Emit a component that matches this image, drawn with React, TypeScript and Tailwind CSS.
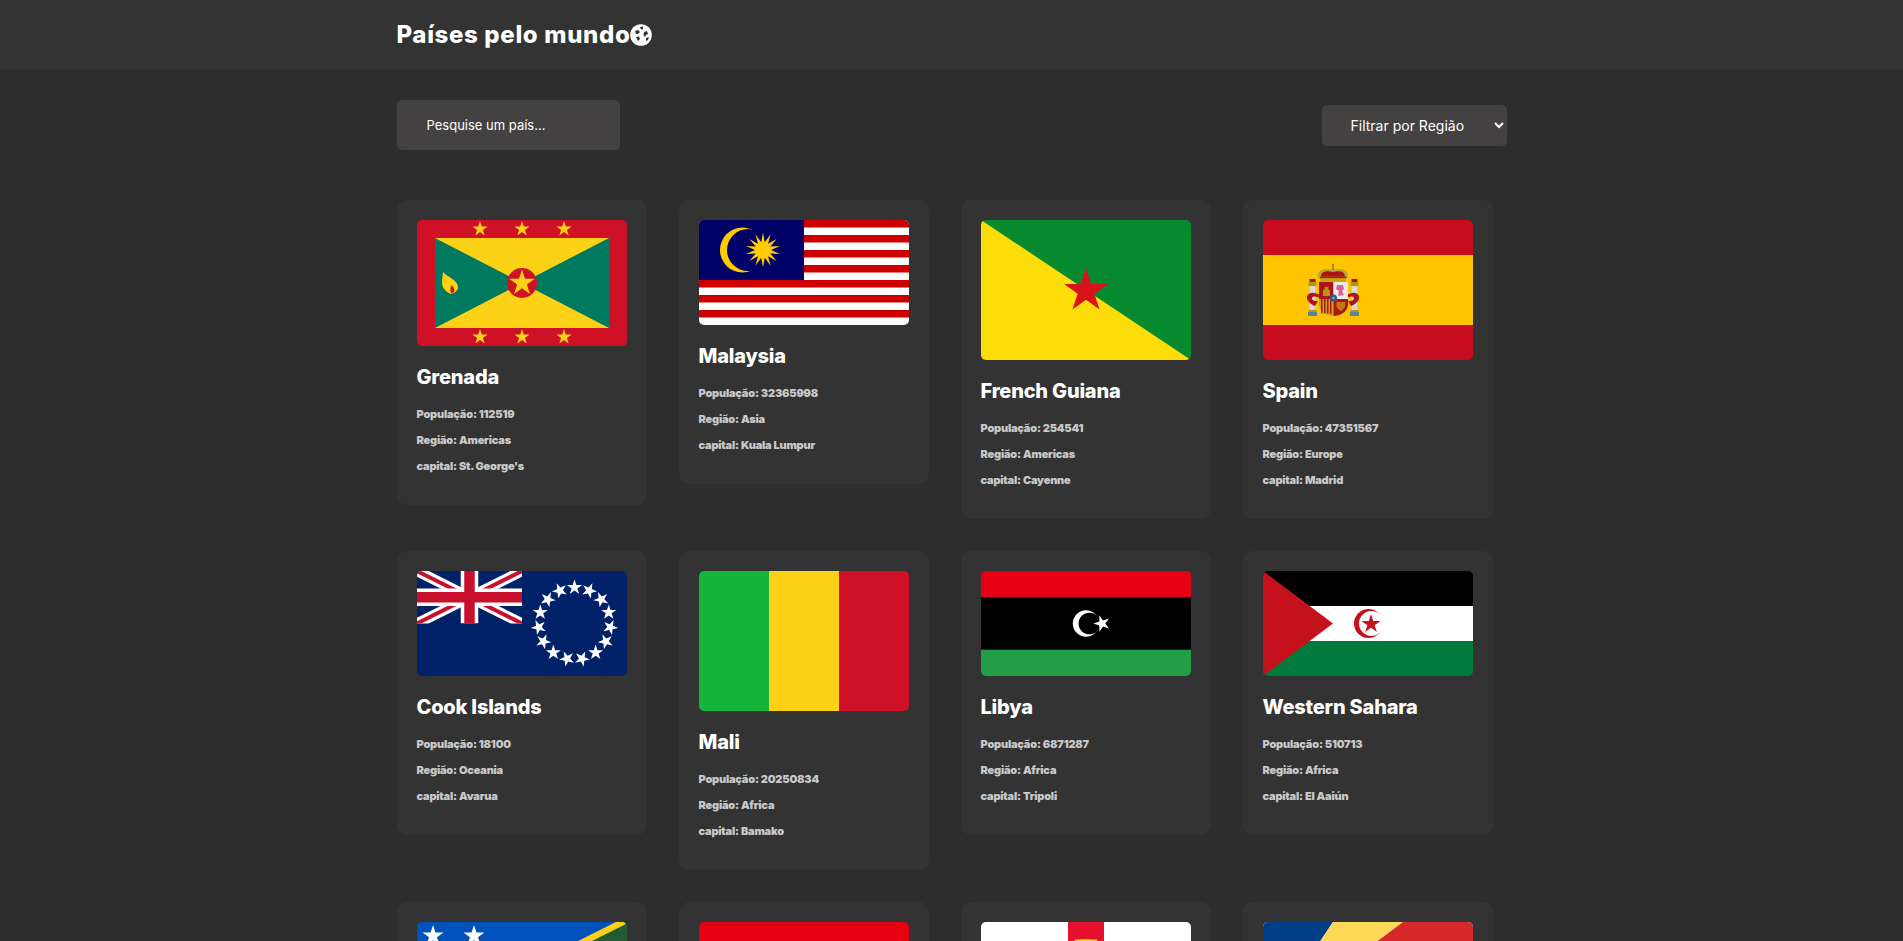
import type { ReactNode } from 'react'

function starPoints(cx: number, cy: number, r: number, rot = 0, inner = 0.382, points = 5) {
  const out: string[] = []
  for (let i = 0; i < points * 2; i++) {
    const rad = i % 2 === 0 ? r : r * inner
    const a = ((rot - 90 + (i * 180) / points) * Math.PI) / 180
    out.push(`${(cx + rad * Math.cos(a)).toFixed(2)},${(cy + rad * Math.sin(a)).toFixed(2)}`)
  }
  return out.join(' ')
}

function Star(props: { cx: number; cy: number; r: number; fill: string; rot?: number }) {
  return <polygon points={starPoints(props.cx, props.cy, props.r, props.rot)} fill={props.fill} />
}

function Flag({ h, children }: { h: number; children: ReactNode }) {
  return (
    <svg viewBox={`0 0 210 ${h}`} className="block w-full rounded-[5px]">
      {children}
    </svg>
  )
}

function Grenada() {
  const gold = '#fcd116'
  return (
    <Flag h={126}>
      <rect width="210" height="126" fill="#ce1126" />
      <rect x="18" y="18" width="174" height="90" fill="#007a5e" />
      <polygon points="18,18 192,18 105,63" fill={gold} />
      <polygon points="18,108 192,108 105,63" fill={gold} />
      <circle cx="105" cy="63" r="15" fill="#ce1126" />
      <Star cx={105} cy={63} r={13.5} fill={gold} />
      {[63, 105, 147].map((x) => (
        <g key={x}>
          <Star cx={x} cy={9} r={8} fill={gold} />
          <Star cx={x} cy={117} r={8} fill={gold} />
        </g>
      ))}
      <path d="M26 52 C30 57 41 60 41 67 C41 71 37 73 34 74 C29 72 25 68 25 62 Z" fill={gold} />
      <path d="M34.5 65 C33 68 33 71 34.5 73.5 L37.5 71.5 C37.5 69 36.5 67 34.5 65Z" fill="#ce1126" />
    </Flag>
  )
}

function Malaysia() {
  const rows = Array.from({ length: 14 }, (_, i) => i)
  return (
    <Flag h={105}>
      <rect width="210" height="105" fill="#ffffff" />
      {rows.map((i) =>
        i % 2 === 0 ? <rect key={i} y={i * 7.5} width="210" height="7.5" fill="#cc0001" /> : null,
      )}
      <rect width="105" height="60" fill="#010066" />
      <circle cx="43.5" cy="30" r="22.5" fill="#ffcc00" />
      <circle cx="49" cy="30" r="21" fill="#010066" />
      <polygon points={starPoints(64, 30, 17.5, 0, 0.46, 14)} fill="#ffcc00" />
    </Flag>
  )
}

function FrenchGuiana() {
  return (
    <Flag h={140}>
      <rect width="210" height="140" fill="#078930" />
      <polygon points="0,0 210,140 0,140" fill="#fcdd09" />
      <Star cx={105} cy={71} r={23} fill="#da121a" />
    </Flag>
  )
}

function Spain() {
  return (
    <Flag h={140}>
      <rect width="210" height="140" fill="#c60b1e" />
      <rect y="35" width="210" height="70" fill="#ffc400" />
      {/* crown */}
      <rect x="69.2" y="44" width="1.6" height="7" fill="#8a7a2a" />
      <path d="M56 59 C52 50 62 47 70 50 C78 47 88 50 84 59 Z" fill="#b9a23a" />
      <path d="M58.5 57 C57 52 63 50 70 52 C77 50 83 52 81.5 57 Z" fill="#ad1519" />
      <rect x="57" y="56.5" width="26" height="5.5" fill="#c8a510" />
      <rect x="57" y="56.5" width="26" height="1.6" fill="#ad1519" />
      {/* pillars */}
      {[45.5, 87.5].map((x) => (
        <g key={x}>
          <rect x={x + 1} y="59" width="6" height="3.5" fill="#ad1519" />
          <rect x={x} y="62" width="8" height="4" fill="#b9950f" />
          <rect x={x + 1.2} y="66" width="5.6" height="24" fill="#d8d8d8" />
          <rect x={x} y="90" width="8" height="2" fill="#b9950f" />
          <rect x={x - 0.5} y="92" width="9" height="4" fill="#5f7f9a" />
        </g>
      ))}
      <path d="M44 76 C47 71 52 73 57 75 L57 78 C52 76 50 76 49 78 C49 81 52 81 55 81 L52 86 C47 84 43 80 44 76Z" fill="#ad1519" />
      <path d="M96 76 C93 71 88 73 84 75 L84 78 C88 76 90 76 91 78 C91 81 88 81 85 81 L88 86 C93 84 97 80 96 76Z" fill="#ad1519" />
      {/* shield */}
      <path d="M56 62 H85 V84 C85 92 77 96 70.5 96 C64 96 56 92 56 84Z" fill="#cccccc" />
      <rect x="56" y="62" width="14.5" height="17" fill="#ad1519" />
      <path d="M60 76 V70 H61.5 V67 H65.5 V70 H67 V76Z" fill="#b9950f" />
      <rect x="70.5" y="62" width="14.5" height="17" fill="#efe7e7" />
      <path d="M74 65 L80 65 L81 69 L79 71 L81 75 L75 76 L76 71 L73 69Z" fill="#d6619b" />
      <path d="M56 79 H70.5 V96 C64 96 56 92 56 84Z" fill="#c8a510" />
      {[58, 61, 64, 67].map((x) => (
        <rect key={x} x={x} y="79" width="1.5" height="14.5" fill="#ad1519" />
      ))}
      <path d="M70.5 79 H85 V84 C85 92 77 96 70.5 96Z" fill="#ad1519" />
      <path d="M73.5 82 H82 V87 L78 91.5 L73.5 87Z" fill="#c8a510" opacity="0.7" />
      <circle cx="70.5" cy="78" r="3.5" fill="#1f5fa8" />
      <circle cx="70.5" cy="78" r="1.3" fill="#c8a510" />
    </Flag>
  )
}

function UnionJack({ w, h }: { w: number; h: number }) {
  return (
    <svg x="0" y="0" width={w} height={h} viewBox="0 0 60 30" preserveAspectRatio="none">
      <rect width="60" height="30" fill="#012169" />
      <path d="M0 0 L60 30 M60 0 L0 30" stroke="#ffffff" strokeWidth="6" />
      <path d="M0 0 L60 30 M60 0 L0 30" stroke="#c8102e" strokeWidth="2.2" />
      <path d="M30 0 V30 M0 15 H60" stroke="#ffffff" strokeWidth="10" />
      <path d="M30 0 V30 M0 15 H60" stroke="#c8102e" strokeWidth="6" />
    </svg>
  )
}

function CookIslands() {
  const stars = Array.from({ length: 15 }, (_, i) => i)
  return (
    <Flag h={105}>
      <rect width="210" height="105" fill="#012169" />
      <UnionJack w={105} h={52.5} />
      {stars.map((i) => {
        const a = (i * 24 * Math.PI) / 180
        return (
          <Star
            key={i}
            cx={157.5 + 36 * Math.sin(a)}
            cy={52.5 - 36 * Math.cos(a)}
            r={8}
            rot={i * 24}
            fill="#ffffff"
          />
        )
      })}
    </Flag>
  )
}

function Mali() {
  return (
    <Flag h={140}>
      <rect width="70" height="140" fill="#14b53a" />
      <rect x="70" width="70" height="140" fill="#fcd116" />
      <rect x="140" width="70" height="140" fill="#ce1126" />
    </Flag>
  )
}

function Libya() {
  return (
    <Flag h={105}>
      <rect width="210" height="26.25" fill="#e70013" />
      <rect y="26.25" width="210" height="52.5" fill="#000000" />
      <rect y="78.75" width="210" height="26.25" fill="#239e46" />
      <circle cx="105" cy="52.5" r="13.2" fill="#ffffff" />
      <circle cx="108.4" cy="52.5" r="10.8" fill="#000000" />
      <Star cx={121} cy={52.5} r={8.6} rot={-90} fill="#ffffff" />
    </Flag>
  )
}

function WesternSahara() {
  return (
    <Flag h={105}>
      <rect width="210" height="35" fill="#000000" />
      <rect y="35" width="210" height="35" fill="#ffffff" />
      <rect y="70" width="210" height="35" fill="#007a3d" />
      <polygon points="0,0 70,52.5 0,105" fill="#c4111b" />
      <circle cx="105.5" cy="52.5" r="14.5" fill="#c4111b" />
      <circle cx="108.5" cy="52.5" r="12.5" fill="#ffffff" />
      <Star cx={108} cy={53} r={10} fill="#c4111b" />
    </Flag>
  )
}

function Solomon() {
  return (
    <Flag h={105}>
      <rect width="210" height="105" fill="#0051ba" />
      <polygon points="213,0 210,0 210,105 3,105" fill="#215b33" />
      <polygon points="199,0 213,0 3,105 -11,105" fill="#fcd116" />
      {[16, 57].map((x) => (
        <Star key={x} cx={x} cy={14} r={11} fill="#ffffff" />
      ))}
    </Flag>
  )
}

function RedFlag() {
  return (
    <Flag h={140}>
      <rect width="210" height="140" fill="#e70011" />
    </Flag>
  )
}

function Guernsey() {
  return (
    <Flag h={140}>
      <rect width="210" height="140" fill="#ffffff" />
      <rect x="87" width="36" height="140" fill="#e8112d" />
      <rect y="52" width="210" height="36" fill="#e8112d" />
      <rect x="94" y="17.5" width="22" height="3" fill="#f9dd16" />
      <rect x="101" y="17.5" width="8" height="105" fill="#f9dd16" />
    </Flag>
  )
}

function Seychelles() {
  return (
    <Flag h={105}>
      <rect width="210" height="105" fill="#ffffff" />
      <polygon points="0,105 0,0 70,0" fill="#003f87" />
      <polygon points="0,105 70,0 140,0" fill="#fcd856" />
      <polygon points="0,105 140,0 210,0 210,35" fill="#d62828" />
      <polygon points="0,105 210,70 210,105" fill="#007a3d" />
    </Flag>
  )
}

function Globe() {
  return (
    <svg viewBox="0 0 22 22" className="h-[22px] w-[22px] shrink-0">
      <circle cx="11" cy="11" r="10.8" fill="#ffffff" />
      <path d="M5 7 L8 6 L10 8 L8 10 L6 10Z" fill="#333333" />
      <path d="M10 3 L13 2.5 L13 5 L11 5.5Z" fill="#333333" />
      <path d="M14 8 L17 7 L18 10 L16 11 L15 13 L13.5 11Z" fill="#333333" />
      <path d="M6 13 L9 12.5 L10 15 L8 17Z" fill="#333333" />
      <path d="M16 14 L19 13 L18 16 L16 17Z" fill="#333333" />
    </svg>
  )
}

type Country = {
  name: string
  population: number
  region: string
  capital: string
  flag: ReactNode
}

const countries: Country[] = [
  { name: 'Grenada', population: 112519, region: 'Americas', capital: "St. George's", flag: <Grenada /> },
  { name: 'Malaysia', population: 32365998, region: 'Asia', capital: 'Kuala Lumpur', flag: <Malaysia /> },
  { name: 'French Guiana', population: 254541, region: 'Americas', capital: 'Cayenne', flag: <FrenchGuiana /> },
  { name: 'Spain', population: 47351567, region: 'Europe', capital: 'Madrid', flag: <Spain /> },
  { name: 'Cook Islands', population: 18100, region: 'Oceania', capital: 'Avarua', flag: <CookIslands /> },
  { name: 'Mali', population: 20250834, region: 'Africa', capital: 'Bamako', flag: <Mali /> },
  { name: 'Libya', population: 6871287, region: 'Africa', capital: 'Tripoli', flag: <Libya /> },
  { name: 'Western Sahara', population: 510713, region: 'Africa', capital: 'El Aaiún', flag: <WesternSahara /> },
]

function CountryCard({ country }: { country: Country }) {
  return (
    <div className="rounded-[10px] bg-[#333333] p-5">
      {country.flag}
      <h2 className="mt-4 text-[20px] leading-[30px] font-extrabold tracking-[-0.2px] text-white">{country.name}</h2>
      <div className="mt-[13px] mb-[10px] flex flex-col gap-2 text-[11px] leading-[18px] font-black tracking-[-0.2px] text-[#c8c8c8]">
        <p>População: {country.population}</p>
        <p>Região: {country.region}</p>
        <p>capital: {country.capital}</p>
      </div>
    </div>
  )
}

export default function App() {
  return (
    <div className="h-screen overflow-hidden bg-[#2d2d2d] font-['Inter',sans-serif] text-white">
      <header className="h-[70px] bg-[#333333]">
        <div className="mx-auto flex h-full w-[1110px] items-center">
          <h1 className="text-[24px] leading-[36px] font-extrabold tracking-[0.65px]">Países pelo mundo</h1>
          <Globe />
        </div>
      </header>
      <main className="mx-auto w-[1110px] pt-[30px]">
        <div className="flex items-start justify-between">
          <input
            placeholder="Pesquise um país..."
            className="h-[50px] w-[223px] rounded-[5px] bg-[#434142] px-[30px] text-[13px] text-white outline-none placeholder:text-white"
          />
          <select className="mt-[5px] h-[41px] w-[185px] rounded-[5px] bg-[#434142] pl-[25px] text-[14px] text-white outline-none">
            <option>Filtrar por Região</option>
          </select>
        </div>
        <div className="mt-[50px] grid grid-cols-[repeat(4,250px)] items-start gap-8">
          {countries.map((c) => (
            <CountryCard key={c.name} country={c} />
          ))}
          {[<Solomon key="a" />, <RedFlag key="b" />, <Guernsey key="c" />, <Seychelles key="d" />].map((flag) => (
            <div key={flag.key} className="rounded-[10px] bg-[#333333] p-5">
              {flag}
            </div>
          ))}
        </div>
      </main>
    </div>
  )
}
